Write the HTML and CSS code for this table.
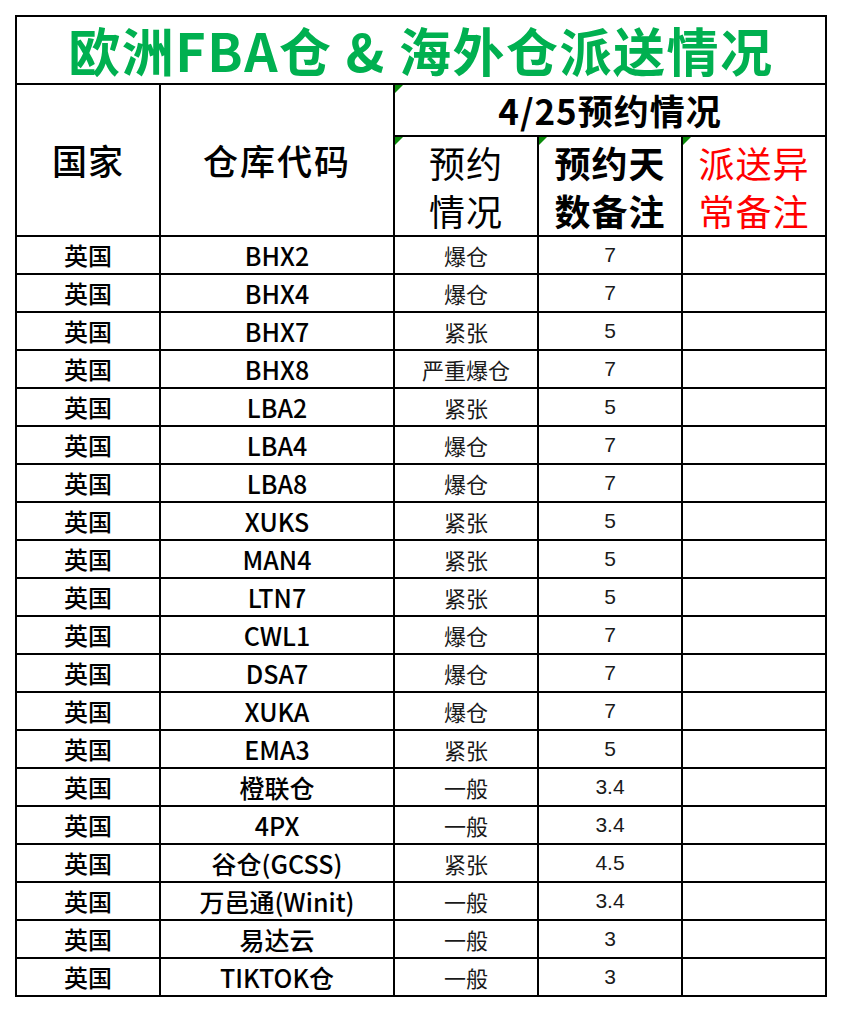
FILE: index.html
```html
<!DOCTYPE html>
<html lang="zh-CN">
<head>
<meta charset="utf-8">
<title>欧洲FBA仓 &amp; 海外仓派送情况</title>
<link rel="stylesheet" href="styles.css">
</head>
<body>
<table class="sheet">
  <colgroup>
    <col class="c-country">
    <col class="c-code">
    <col class="c-status">
    <col class="c-days">
    <col class="c-note">
  </colgroup>
  <thead>
    <tr class="r-title"><th colspan="5" class="title">欧洲FBA仓 &amp; 海外仓派送情况</th></tr>
    <tr class="r-h1">
      <th rowspan="2" class="h-big">国家</th>
      <th rowspan="2" class="h-big">仓库代码</th>
      <th colspan="3" class="h-date mark">4/25预约情况</th>
    </tr>
    <tr class="r-h2">
      <th class="h-sub h-light mark">预约<br>情况</th>
      <th class="h-sub h-bold mark">预约天<br>数备注</th>
      <th class="h-sub h-red mark">派送异<br>常备注</th>
    </tr>
  </thead>
  <tbody>
    <tr><td class="country">英国</td><td class="code">BHX2</td><td class="status">爆仓</td><td class="days">7</td><td></td></tr>
    <tr><td class="country">英国</td><td class="code">BHX4</td><td class="status">爆仓</td><td class="days">7</td><td></td></tr>
    <tr><td class="country">英国</td><td class="code">BHX7</td><td class="status">紧张</td><td class="days">5</td><td></td></tr>
    <tr><td class="country">英国</td><td class="code">BHX8</td><td class="status">严重爆仓</td><td class="days">7</td><td></td></tr>
    <tr><td class="country">英国</td><td class="code">LBA2</td><td class="status">紧张</td><td class="days">5</td><td></td></tr>
    <tr><td class="country">英国</td><td class="code">LBA4</td><td class="status">爆仓</td><td class="days">7</td><td></td></tr>
    <tr><td class="country">英国</td><td class="code">LBA8</td><td class="status">爆仓</td><td class="days">7</td><td></td></tr>
    <tr><td class="country">英国</td><td class="code">XUKS</td><td class="status">紧张</td><td class="days">5</td><td></td></tr>
    <tr><td class="country">英国</td><td class="code">MAN4</td><td class="status">紧张</td><td class="days">5</td><td></td></tr>
    <tr><td class="country">英国</td><td class="code">LTN7</td><td class="status">紧张</td><td class="days">5</td><td></td></tr>
    <tr><td class="country">英国</td><td class="code">CWL1</td><td class="status">爆仓</td><td class="days">7</td><td></td></tr>
    <tr><td class="country">英国</td><td class="code">DSA7</td><td class="status">爆仓</td><td class="days">7</td><td></td></tr>
    <tr><td class="country">英国</td><td class="code">XUKA</td><td class="status">爆仓</td><td class="days">7</td><td></td></tr>
    <tr><td class="country">英国</td><td class="code">EMA3</td><td class="status">紧张</td><td class="days">5</td><td></td></tr>
    <tr><td class="country">英国</td><td class="code">橙联仓</td><td class="status">一般</td><td class="days">3.4</td><td></td></tr>
    <tr><td class="country">英国</td><td class="code">4PX</td><td class="status">一般</td><td class="days">3.4</td><td></td></tr>
    <tr><td class="country">英国</td><td class="code">谷仓(GCSS)</td><td class="status">紧张</td><td class="days">4.5</td><td></td></tr>
    <tr><td class="country">英国</td><td class="code">万邑通(Winit)</td><td class="status">一般</td><td class="days">3.4</td><td></td></tr>
    <tr><td class="country">英国</td><td class="code">易达云</td><td class="status">一般</td><td class="days">3</td><td></td></tr>
    <tr><td class="country">英国</td><td class="code">TIKTOK仓</td><td class="status">一般</td><td class="days">3</td><td></td></tr>
  </tbody>
</table>
</body>
</html>
```

FILE: styles.css
```css
html, body {
  margin: 0;
  padding: 0;
  background: #ffffff;
}

body {
  padding: 15px 0 0 15px;
  font-family: "Noto Sans CJK SC", "Noto Sans", sans-serif;
  color: #000;
}

.sheet {
  border-collapse: collapse;
  table-layout: fixed;
  width: 812px;
}

.c-country { width: 144px; }
.c-code { width: 234px; }
.c-status { width: 144px; }
.c-days { width: 144px; }
.c-note { width: 144px; }

.sheet th,
.sheet td {
  border: 2px solid #000;
  padding: 0;
  text-align: center;
  vertical-align: middle;
  white-space: nowrap;
}

.r-title { height: 68px; }
.r-h1 { height: 52px; }
.r-h2 { height: 100px; }
.sheet tbody tr { height: 38px; }

.title {
  color: #00b050;
  font-size: 52px;
  font-weight: 700;
  line-height: 58px;
  padding-top: 4px;
  letter-spacing: 1.5px;
}

.h-big {
  font-size: 35px;
  font-weight: 500;
  line-height: 44px;
  letter-spacing: 1px;
}

.h-big + .h-big {
  letter-spacing: 2px;
}

.h-date {
  font-size: 35px;
  font-weight: 700;
  line-height: 44px;
  letter-spacing: 1px;
}

.h-sub {
  font-size: 36px;
  line-height: 48px;
  letter-spacing: 1px;
  white-space: normal;
}

.h-light { font-weight: 400; }
.h-bold { font-weight: 700; }
.h-red { font-weight: 400; color: #ff0000; }

.mark { position: relative; }
.mark::before {
  content: "";
  position: absolute;
  left: 0;
  top: 0;
  width: 0;
  height: 0;
  border-top: 8px solid #0a8a0a;
  border-right: 8px solid transparent;
}

.country {
  font-size: 24px;
  font-weight: 500;
  line-height: 34px;
}

.code {
  font-size: 25px;
  font-weight: 500;
  line-height: 34px;
  padding-top: 4px;
}

.status {
  font-size: 22px;
  font-weight: 400;
  color: #1a1a1a;
  line-height: 34px;
}

.days {
  font-family: "Liberation Sans", "Noto Sans CJK SC", sans-serif;
  font-size: 21px;
  color: #1a1a1a;
  line-height: 34px;
}
```
